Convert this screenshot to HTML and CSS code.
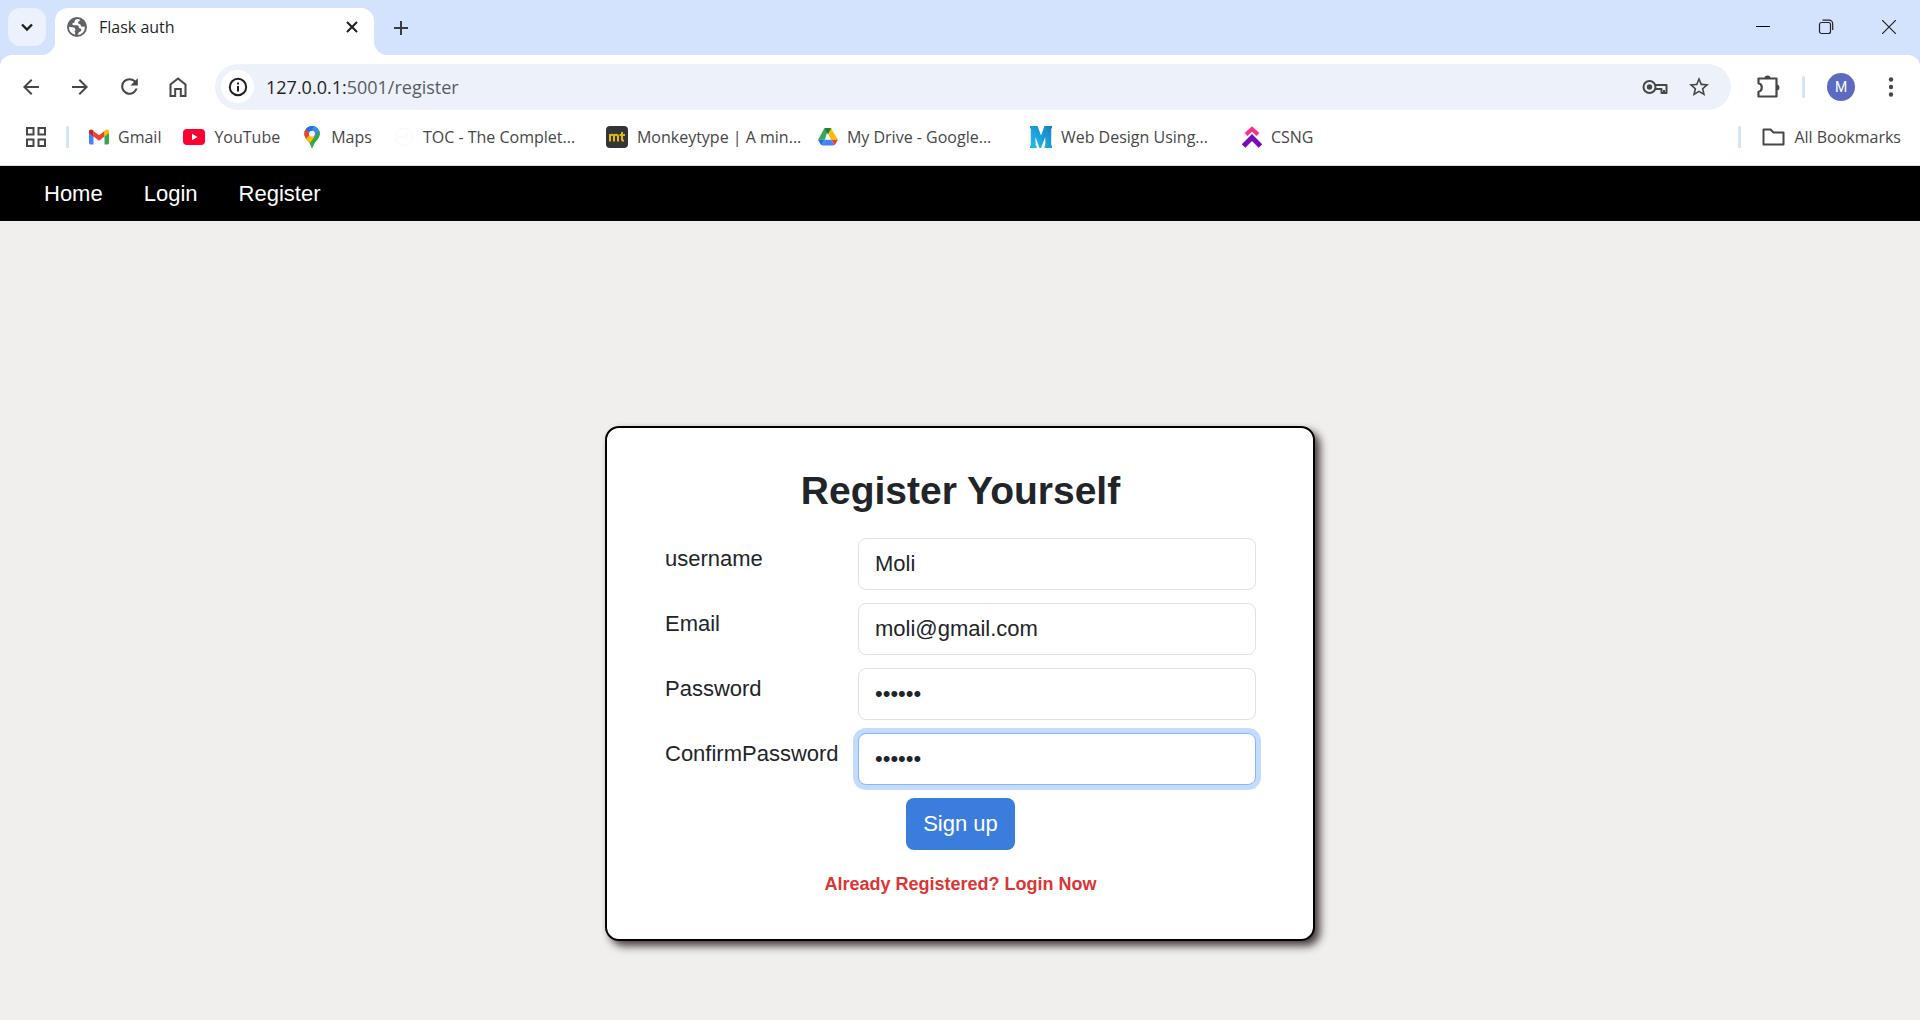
FILE: index.html
```html
<!DOCTYPE html>
<html lang="en">
<head>
<meta charset="utf-8">
<title>Flask auth</title>
<link rel="stylesheet" href="styles.css">
</head>
<body>
<header class="browser">
  <div class="tabstrip">
    <button class="tab-search" aria-label="Search tabs"><svg width="14" height="14" viewBox="0 0 14 14" fill="none" stroke="#1f1f1f" stroke-width="2.4"><path d="M2 4.5l5 5 5-5"/></svg></button>
    <div class="tab">
      <svg width="20" height="20" viewBox="0 0 20 20"><circle cx="10" cy="10" r="10" fill="#5f6368"/><path fill="#fff" d="M10.500 2C8 2.500 7.500 3.500 7.700 4.800 7.800 5.800 6.500 6 5.500 6.300 5 7.300 5.600 8.300 6.800 8.300h3.400c1.300.2 1.800 1.200 1.600 2.300.6 1.400 2.600.6 2.600 2.300-.2 1.800-2.600 1.600-3 3-.2.900-.6 1.500-1.500 2.100A8 8 0 0 0 17.900 9.200c-1 .8-2.400.9-3.400.2-.8-.7-.7-1.800-1.700-2.100-1.200-.2-1.800-.9-1.700-2 .1-1.200 1.600-1.200 2.200-2.400A8 8 0 0 0 10.500 2zM2 9.800A8 8 0 0 0 8 17.700c.4-1.500.2-2.400-.6-3.200 1.200-.8 1.400-2 .6-3-.8-1-2-1.200-3.200-1.200z"/></svg>
      <span class="tab-title">Flask auth</span>
      <button class="plain tab-close" aria-label="Close tab"><svg width="12" height="12" viewBox="0 0 12 12" stroke="#1f1f1f" stroke-width="2"><path d="M1 1l10 10M11 1L1 11"/></svg></button>
    </div>
    <button class="plain new-tab" aria-label="New tab"><svg width="14" height="14" viewBox="0 0 14 14" stroke="#3c3c3c" stroke-width="2"><path d="M7 0v14M0 7h14"/></svg></button>
    <div class="window-controls">
      <button class="plain" aria-label="Minimize"><svg width="14" height="14" viewBox="0 0 14 14" stroke="#000"><path d="M0 6.500h14"/></svg></button>
      <button class="plain" aria-label="Restore"><svg width="16" height="16" viewBox="0 0 16 16" fill="none" stroke="#222" stroke-width="1.200"><rect x="1.500" y="3.500" width="11" height="11" rx="2"/><path d="M4.500 1.200H11a3.700 3.700 0 0 1 3.700 3.700V11"/></svg></button>
      <button class="plain" aria-label="Close"><svg width="14" height="14" viewBox="0 0 14 14" stroke="#222" stroke-width="1.200"><path d="M0 0l14 14M14 0L0 14"/></svg></button>
    </div>
  </div>

  <div class="toolbar">
    <button class="plain tool" aria-label="Back"><svg width="24" height="24" viewBox="0 0 24 24" fill="#474747"><path d="M20 11H7.830l5.590-5.590L12 4l-8 8 8 8 1.410-1.410L7.830 13H20v-2z"/></svg></button>
    <button class="plain tool" aria-label="Forward"><svg width="24" height="24" viewBox="0 0 24 24" fill="#474747"><path d="M12 4l-1.410 1.410L16.170 11H4v2h12.170l-5.580 5.590L12 20l8-8z"/></svg></button>
    <button class="plain tool" aria-label="Reload"><svg width="25" height="25" viewBox="0 0 24 24" fill="#474747"><path d="M17.650 6.350A7.960 7.960 0 0 0 12 4a8 8 0 1 0 7.730 10h-2.080A6 6 0 1 1 12 6c1.660 0 3.140.69 4.220 1.780L13 11h7V4l-2.350 2.350z"/></svg></button>
    <button class="plain tool" aria-label="Home"><svg width="24" height="24" viewBox="0 0 24 24" fill="none" stroke="#474747" stroke-width="2"><path d="M4.500 21V9.500L12 3.500l7.500 6V21h-4.700v-7H9.200v7z"/></svg></button>
    <div class="omnibox">
      <button class="site-info" aria-label="Site information"><svg width="20" height="20" viewBox="0 0 20 20" fill="none" stroke="#1f1f1f" stroke-width="2"><circle cx="10" cy="10" r="8.200"/><path d="M10 9v5.500M10 5.500v2"/></svg></button>
      <span class="url">127.0.0.1:<span class="url-path">5001/register</span></span>
      <button class="plain tool" aria-label="Passwords"><svg width="26" height="16" viewBox="0 0 26 16" fill="none" stroke="#474747" stroke-width="2"><circle cx="7.500" cy="8" r="6"/><circle cx="7.500" cy="8" r="2.700" fill="#474747" stroke="none"/><path d="M12.500 6H24.500v8h-5v-4h-6.500M22 14v-3" stroke-linejoin="round"/></svg></button>
      <button class="plain tool" aria-label="Bookmark this tab"><svg width="24" height="24" viewBox="0 0 24 24" fill="#474747"><path d="M22 9.240l-7.190-.62L12 2 9.190 8.630 2 9.240l5.460 4.730L5.820 21 12 17.270 18.180 21l-1.630-7.030L22 9.240zM12 15.400l-3.760 2.270 1-4.280-3.320-2.880 4.380-.38L12 6.100l1.710 4.040 4.380.38-3.320 2.880 1 4.280L12 15.400z"/></svg></button>
    </div>
    <button class="plain tool" aria-label="Extensions"><svg width="24" height="24" viewBox="0 0 24 24"><path fill="none" stroke="#474747" stroke-width="2.200" stroke-linejoin="round" d="M2.500 3.500h18v18h-18v-4.800c2-.5 3.300-2.200 3.300-4.200s-1.300-3.700-3.300-4.200z"/><path fill="#474747" d="M8.500 3.500a3 3 0 0 1 6 0zM20.500 9.500a3 3 0 0 1 0 6z"/></svg></button>
    <span class="divider"></span>
    <button class="avatar" aria-label="Profile">M</button>
    <button class="plain tool" aria-label="Menu"><svg width="6" height="20" viewBox="0 0 6 20" fill="#474747"><circle cx="3" cy="2.500" r="2.200"/><circle cx="3" cy="10" r="2.200"/><circle cx="3" cy="17.500" r="2.200"/></svg></button>
  </div>

  <nav class="bookmarks" aria-label="Bookmarks">
    <button class="plain apps" aria-label="Apps"><svg width="20" height="20" viewBox="0 0 20 20" fill="none" stroke="#474747" stroke-width="2"><path d="M1 1h6.500v6.500H1zM12.500 1H19v6.500h-6.500zM1 12.500h6.500V19H1zM12.500 12.500H19V19h-6.500z"/></svg></button>
    <span class="divider"></span>
    <a class="bookmark" href="#"><svg width="20" height="20" viewBox="0 0 20 20"><path fill="#4285f4" d="M0 5l4.500 3v9.500H1.400A1.400 1.400 0 0 1 0 16z"/><path fill="#34a853" d="M20 5l-4.500 3v9.500h3.100A1.400 1.400 0 0 0 20 16z"/><path fill="#ea4335" d="M4.500 4l5.500 4.200L15.500 4v5.500L10 13.700 4.500 9.500z"/><path fill="#c5221f" d="M0 4.500C0 2.500 2 1.800 3.600 3l.9.700v5.800L0 6.200z"/><path fill="#fbbc04" d="M20 4.500c0-2-2-2.700-3.600-1.500l-.9.700v5.800L20 6.200z"/></svg><span>Gmail</span></a>
    <a class="bookmark" href="#"><svg width="22" height="20" viewBox="0 0 22 20"><rect y="2" width="22" height="16" rx="4" fill="#ff0033"/><path fill="#fff" d="M9 6.800l5.500 3.200L9 13.200z"/></svg><span>YouTube</span></a>
    <a class="bookmark" href="#"><svg width="20" height="22" viewBox="0 0 20 22"><defs><clipPath id="pin"><path d="M10 0a7.700 7.700 0 0 0-7.700 7.700c0 3.500 2 5.300 4 7.800 1.700 2.100 2.300 3.500 2.700 5.300.3 1.500 1.700 1.500 2 0 .4-1.800 1-3.200 2.700-5.300 2-2.500 4-4.300 4-7.800A7.700 7.700 0 0 0 10 0z"/></clipPath></defs><g clip-path="url(#pin)"><path fill="#34a853" d="M0 0h20v22H0z"/><path fill="#fbbc04" d="M0 14L10 3l4 7L5 20z"/><path fill="#ea4335" d="M0 1h5l5 5-6.500 7.500L0 12z"/><path fill="#1a73e8" d="M3 2L13-2l2 5-6.500 5z"/><path fill="#4285f4" d="M12-1l8 3v5l-8 4-3-4z"/><path fill="#34a853" d="M17 4l3 2v6l-8 10-4-4z"/></g><circle cx="10" cy="7.700" r="2.900" fill="#fff"/></svg><span>Maps</span></a>
    <a class="bookmark bookmark-wide" href="#"><svg width="20" height="20" viewBox="0 0 20 20" fill="none" stroke="#f5f7fa"><circle cx="10" cy="10" r="8.500"/><path d="M3 12l3-3 3 2 3-2 2-3M11 10l2 3"/></svg><span>TOC - The Complet...</span></a>
    <a class="bookmark bookmark-wide" href="#"><svg width="22" height="22" viewBox="0 0 22 22"><rect width="22" height="22" rx="4" fill="#323437"/><g fill="none" stroke="#e2b714" stroke-width="2"><path d="M4 15.500V8M4 10.500C4 8 8 8 8 10.500v5M8 10.500c0-2.500 4-2.500 4 0v5M16 6v7.500c0 1 .6 1.200 2 1.200M13.500 9H19"/></g></svg><span>Monkeytype | A min...</span></a>
    <a class="bookmark bookmark-wide" href="#"><svg width="20" height="20" viewBox="0 0 20 20"><path fill="#34a853" d="M6.800 1h3.600L6.900 12.800H0l6-10.700z"/><path fill="#188038" d="M6.500 1.500Q7 1 7.800 1h4.400q.8 0 1.300.5L10 7.500z"/><path fill="#fbbc04" d="M12 1q1 0 1.600 1l6.200 10.800h-6.600L10 7.300 13.300 1.500z"/><path fill="#ea4335" d="M13.300 12.800h6.600L17.500 17q-.5.900-1.100 1z"/><path fill="#1a73e8" d="M0 12.800h6.700L3.600 18q-.6-.1-1.100-1z"/><path fill="#4285f4" d="M6.700 12.800h6.600l3.100 5.300q-.4.400-1.200.4H4.800q-.8 0-1.200-.4z"/></svg><span>My Drive - Google...</span></a>
    <a class="bookmark bookmark-wide" href="#"><svg width="22" height="22" viewBox="0 0 22 22"><defs><linearGradient id="blue" x1="0" y1="1" x2="1" y2="0"><stop stop-color="#22bdf5"/><stop offset="1" stop-color="#1780bd"/></linearGradient></defs><path fill="url(#blue)" d="M0 0h7.500L11 9.500 14.500 0H22v2l-.8 1v16l.8 1v2h-7.500v-2l.8-1v-8L11 22h-1.500L5.500 11v8l1 1v2H0v-2l.8-1V3L0 2z"/></svg><span>Web Design Using...</span></a>
    <a class="bookmark" href="#"><svg width="20" height="22" viewBox="0 0 20 22" fill="none"><path stroke="#ff2e88" stroke-width="4" d="M4 8.500l6-5.500 6 5.500"/><path stroke="#760bbd" stroke-width="5" d="M1.500 20l8.500-8.500L18.500 20"/></svg><span>CSNG</span></a>
    <div class="all-bookmarks">
      <span class="divider"></span>
      <a class="bookmark" href="#"><svg width="23" height="18" viewBox="0 0 23 18" fill="none" stroke="#474747" stroke-width="2" stroke-linejoin="round"><path d="M1.500 1.500h7l3 3h10v12h-20z"/></svg><span>All Bookmarks</span></a>
    </div>
  </nav>
</header>

<nav class="site-nav">
  <a href="#">Home</a>
  <a href="#">Login</a>
  <a href="#">Register</a>
</nav>

<main class="page">
  <form class="card">
    <h1>Register Yourself</h1>
    <div class="field"><label for="username">username</label><input id="username" type="text" value="Moli"></div>
    <div class="field"><label for="email">Email</label><input id="email" type="email" value="moli@gmail.com"></div>
    <div class="field"><label for="password">Password</label><input id="password" type="password" value="secret"></div>
    <div class="field"><label for="confirm">ConfirmPassword</label><input id="confirm" class="is-focused" type="password" value="secret"></div>
    <button class="submit" type="submit">Sign up</button>
    <a class="login-link" href="#">Already Registered? Login Now</a>
  </form>
</main>
</body>
</html>
```
FILE: styles.css
```css
* { box-sizing: border-box; }

body {
  margin: 0;
  min-height: 100vh;
  background: #f0efed;
  color: #212529;
  font: 22px/34px "Liberation Sans", Arial, sans-serif;
}

svg { display: block; flex: none; }
a { text-decoration: none; color: inherit; }
button, input { font: inherit; color: inherit; margin: 0; }

/* Browser window */
.browser {
  background: #d3e2fd;
  border-bottom: 1px solid #dddddd;
  font: 16px/22px "Open Sans", "Noto Sans", sans-serif;
  color: #474747;
}

.plain {
  display: flex;
  align-items: center;
  justify-content: center;
  padding: 0;
  border: 0;
  background: none;
}

.tabstrip {
  display: flex;
  height: 55px;
  padding-left: 8px;
}

.tab-search {
  display: flex;
  align-items: center;
  justify-content: center;
  width: 38px;
  height: 38px;
  margin: 8px 9px 0 0;
  padding: 0;
  border: 0;
  border-radius: 12px;
  background: #ebf1fd;
}

.tab {
  position: relative;
  display: flex;
  align-items: center;
  width: 319px;
  margin-top: 8px;
  padding: 0 14px 9px 12px;
  border-radius: 13px 13px 0 0;
  background: #ffffff;
  color: #1f1f1f;
}

.tab::before,
.tab::after {
  content: "";
  position: absolute;
  bottom: 0;
  width: 15px;
  height: 15px;
}

.tab::before {
  right: 100%;
  background: radial-gradient(circle at 0 0, transparent 15px, #ffffff 16px);
}

.tab::after {
  left: 100%;
  background: radial-gradient(circle at 100% 0, transparent 15px, #ffffff 16px);
}

.tab-title { flex: 1; margin-left: 12px; }
.tab-close { width: 16px; height: 16px; }
.new-tab { width: 38px; height: 38px; margin: 9px 0 0 8px; }

.window-controls { display: flex; margin-left: auto; }
.window-controls button { width: 63px; height: 54px; }

.toolbar {
  display: flex;
  align-items: center;
  gap: 15px;
  height: 63px;
  padding: 0 12px 0 14px;
  border-radius: 12px 12px 0 0;
  background: #ffffff;
}

.tool { width: 34px; height: 34px; }

.omnibox {
  display: flex;
  flex: 1;
  align-items: center;
  gap: 10px;
  height: 46px;
  margin: 0 5px;
  padding: 0 15px 0 6px;
  border-radius: 23px;
  background: #ecf1fa;
}

.site-info {
  display: flex;
  align-items: center;
  justify-content: center;
  width: 33px;
  height: 33px;
  padding: 0;
  border: 0;
  border-radius: 50%;
  background: #ffffff;
}

.url { flex: 1; margin-left: 2px; font-size: 18px; color: #1f1f1f; }
.url-path { color: #5a5c60; }

.divider {
  width: 3px;
  height: 22px;
  border-radius: 2px;
  background: #d3e2fd;
}

.toolbar > .divider { margin-left: 2px; }

.avatar {
  width: 28px;
  height: 28px;
  margin: 0 4px 0 7px;
  padding: 0;
  border: 0;
  border-radius: 50%;
  background: #5c6bc0;
  color: #ffffff;
  font: 14px/28px Roboto, sans-serif;
}

.bookmarks {
  display: flex;
  align-items: center;
  height: 47px;
  padding: 0 19px 9px 26px;
  background: #ffffff;
}

.bookmarks > .divider { margin: 0 20px; }

.bookmark {
  display: flex;
  align-items: center;
  gap: 9px;
  padding-right: 22px;
  white-space: nowrap;
}

.bookmark-wide { width: 212px; padding-right: 0; }

.all-bookmarks {
  display: flex;
  align-items: center;
  gap: 21px;
  margin-left: auto;
}

.all-bookmarks .bookmark { padding-right: 0; }

/* Site */
.site-nav {
  display: flex;
  gap: 41px;
  padding: 11px 44px 10px;
  background: #000000;
  color: #ffffff;
}

.page { padding: 205px 16px 78px; }

.card {
  display: flex;
  flex-direction: column;
  align-items: center;
  gap: 13px;
  width: 100%;
  max-width: 710px;
  margin: 0 auto;
  padding: 39px 57px 41px 58px;
  border: 2px solid #000000;
  border-radius: 14px;
  background: #ffffff;
  box-shadow: 5px 5px 8px #463c3c;
}

h1 {
  margin: 0 0 10px;
  font-size: 39px;
  line-height: 48px;
}

.field {
  display: grid;
  grid-template-columns: 193px 1fr;
  width: 100%;
}

.field label { padding-top: 4px; }

.field input {
  width: 100%;
  height: 52px;
  padding: 8px 16px;
  border: 1px solid #dee2e6;
  border-radius: 8px;
  outline: 0;
  background: #ffffff;
}

.field input:focus,
.field .is-focused {
  border-color: #86b7fe;
  box-shadow: 0 0 0 5px #c2dbfe;
}

.submit {
  padding: 9px 17px;
  border: 0;
  border-radius: 8px;
  background: #3b7ddd;
  color: #ffffff;
}

.login-link {
  margin-top: 8px;
  font-size: 18px;
  line-height: 27px;
  font-weight: bold;
  color: #dc3535;
}
```
